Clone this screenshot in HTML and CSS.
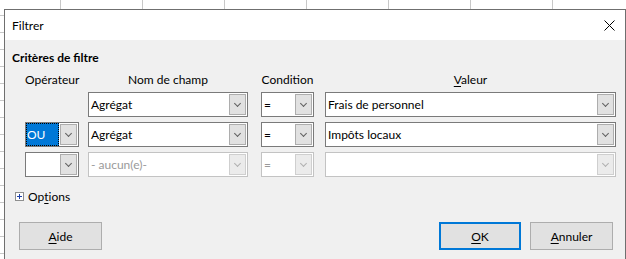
FILE: index.html
```html
<!DOCTYPE html>
<html lang="fr">
<head>
<meta charset="utf-8">
<title>Filtrer</title>
<link rel="stylesheet" href="styles.css">
</head>
<body>
<div class="sheet"></div>
<div class="dialog">
  <div class="titlebar">
    <span class="title">Filtrer</span>
    <svg class="close" width="11" height="11" viewBox="0 0 11 11"><path d="M0.5 0.5 L10.5 10.5 M10.5 0.5 L0.5 10.5" stroke="#000" stroke-width="1" fill="none"/></svg>
  </div>
  <div class="content">
    <div class="heading">Critères de filtre</div>
    <div class="grid">
      <div class="colhead">Opérateur</div>
      <div class="colhead">Nom de champ</div>
      <div class="colhead">Condition</div>
      <div class="colhead"><u>V</u>aleur</div>

      <div></div>
      <div class="combo w-field"><span class="val">Agrégat</span><span class="btn"><i class="chev"></i></span></div>
      <div class="combo w-cond"><span class="val">=</span><span class="btn"><i class="chev"></i></span></div>
      <div class="combo w-value"><span class="val">Frais de personnel</span><span class="btn"><i class="chev"></i></span></div>

      <div class="combo w-op"><span class="val sel">OU</span><span class="btn"><i class="chev"></i></span></div>
      <div class="combo w-field"><span class="val">Agrégat</span><span class="btn"><i class="chev"></i></span></div>
      <div class="combo w-cond"><span class="val">=</span><span class="btn"><i class="chev"></i></span></div>
      <div class="combo w-value"><span class="val">Impôts locaux</span><span class="btn"><i class="chev"></i></span></div>

      <div class="combo w-op"><span class="val"></span><span class="btn"><i class="chev"></i></span></div>
      <div class="combo w-field disabled"><span class="val">- aucun(e)-</span><span class="btn"><i class="chev"></i></span></div>
      <div class="combo w-cond disabled"><span class="val">=</span><span class="btn"><i class="chev"></i></span></div>
      <div class="combo w-value disabled"><span class="val"></span><span class="btn"><i class="chev"></i></span></div>
    </div>
    <div class="options"><span class="expander"><svg width="9" height="9" viewBox="0 0 9 9"><rect x="0.5" y="0.5" width="8" height="8" fill="#fff" stroke="#8e8f8f"/><path d="M2 4.5 H7 M4.5 2 V7" stroke="#1c3fa8" stroke-width="1"/></svg></span>Op<u>t</u>ions</div>
    <div class="buttons">
      <button class="pbtn"><u>A</u>ide</button>
      <span class="spacer"></span>
      <button class="pbtn default"><u>O</u>K</button>
      <button class="pbtn"><u>A</u>nnuler</button>
    </div>
  </div>
</div>
</body>
</html>
```
FILE: styles.css
```css
html, body {
  margin: 0;
  padding: 0;
}
body {
  width: 626px;
  height: 259px;
  overflow: hidden;
  position: relative;
  background: #ffffff;
  font-family: Lato, "Noto Sans", sans-serif;
  font-size: 12px;
  color: #000;
}
.sheet {
  position: absolute;
  inset: 0;
  background-image:
    linear-gradient(to right, #c8c8c8 1px, transparent 1px),
    linear-gradient(to bottom, #c8c8c8 1px, transparent 1px);
  background-size: 82px 100%, 100% 17px;
  background-position: 60px 0, 0 15px;
}
.dialog {
  position: absolute;
  left: 4px;
  top: 9px;
  width: 620px;
  height: 249px;
  border: 1px solid #6f6f6f;
  border-bottom: none;
  background: #f0f0f0;
  display: flex;
  flex-direction: column;
  overflow: hidden;
}
.titlebar {
  height: 30px;
  flex: none;
  background: #fff;
  display: flex;
  align-items: center;
  padding-left: 7px;
  padding-right: 10px;
}
.title {
  flex: 1;
  line-height: 15px;
  margin-top: 1px;
}
.close {
  display: block;
  margin-top: 1px;
}
.content {
  padding: 10px 12px 0 7px;
}
.heading {
  font-weight: bold;
  line-height: 15px;
}
.grid {
  display: grid;
  grid-template-columns: 63px 173px 64px 291px;
  grid-template-rows: 15px;
  grid-auto-rows: 25px;
  row-gap: 5px;
  margin-left: 13px;
  margin-top: 7px;
}
.colhead {
  grid-row: 1;
  text-align: center;
  line-height: 15px;
  height: 15px;
  align-self: start;
}
.colhead:nth-child(1) { width: 54px; }
.colhead:nth-child(2) { width: 160px; }
.colhead:nth-child(3) { width: 53px; }
.colhead:nth-child(4) { width: 291px; }

.combo {
  box-sizing: border-box;
  height: 25px;
  border: 1px solid #7a7a7a;
  background: #fff;
  display: flex;
  align-items: stretch;
}
.w-op { width: 54px; }
.w-field { width: 160px; }
.w-cond { width: 53px; }
.w-value { width: 291px; }
.val {
  flex: 1;
  display: flex;
  align-items: center;
  padding-left: 2px;
  white-space: nowrap;
  overflow: hidden;
  line-height: 15px;
}
.val.sel {
  background: #0078d7;
  color: #fff;
  outline: 1px dotted #000;
  outline-offset: -1px;
  padding-left: 1px;
}
.btn {
  box-sizing: border-box;
  width: 17px;
  margin: 1px;
  border: 1px solid #adadad;
  background: #e1e1e1;
  display: flex;
  align-items: center;
  justify-content: center;
}
.chev {
  display: block;
  width: 4px;
  height: 4px;
  border-right: 1px solid #5f5f5f;
  border-bottom: 1px solid #5f5f5f;
  transform: rotate(45deg);
  margin-top: -3px;
}
.disabled {
  border-color: #c3c3c3;
  color: #9a9a9a;
}
.disabled .btn {
  border-color: #cfcfcf;
  background: #ebebeb;
}
.disabled .chev {
  border-color: #b0b0b0;
}

.options {
  display: flex;
  align-items: center;
  margin-top: 12px;
  line-height: 15px;
  padding-left: 3px;
}
.expander {
  display: block;
  width: 9px;
  height: 9px;
  margin-right: 4px;
}
.expander svg { display: block; }

.buttons {
  display: flex;
  margin-top: 18px;
  padding-left: 7px;
}
.spacer { flex: 1; }
.pbtn {
  box-sizing: border-box;
  height: 28px;
  width: 83px;
  border: 1px solid #adadad;
  background: #e1e1e1;
  font-family: inherit;
  font-size: 12px;
  color: #000;
  padding: 0;
  margin: 0;
}
.pbtn.default {
  border: 2px solid #0078d7;
  width: 82px;
  margin-right: 9px;
}
u { text-decoration-thickness: 1px; text-underline-offset: 2px; }
```
